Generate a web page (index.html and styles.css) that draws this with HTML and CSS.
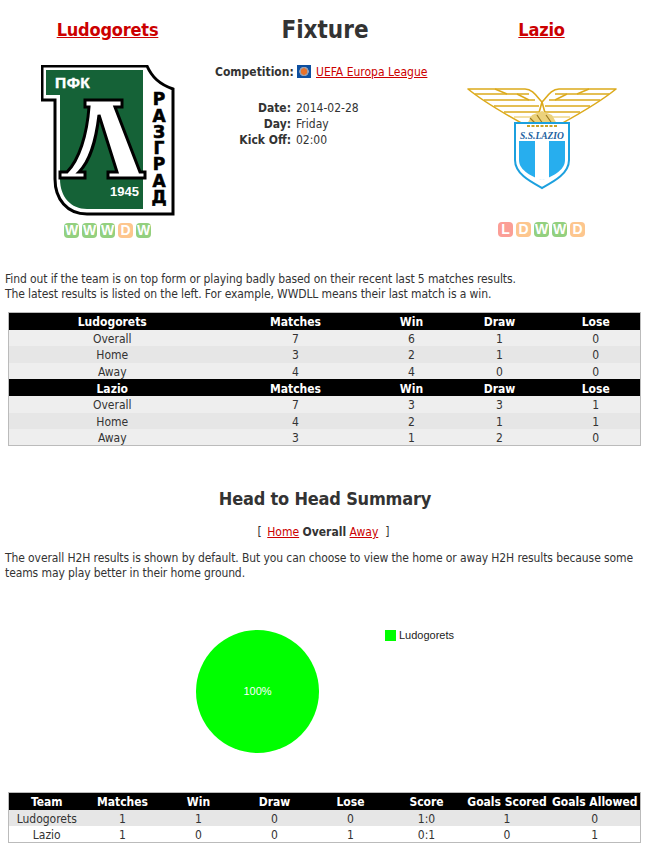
FILE: index.html
```html
<!DOCTYPE html>
<html lang="en">
<head>
<meta charset="utf-8">
<title>Fixture</title>
<link rel="stylesheet" href="styles.css">
</head>
<body>
<header class="fixture">
  <section class="team">
    <h2 class="team-name"><a href="#">Ludogorets</a></h2>
    <svg class="crest-l" width="134" height="151" viewBox="0 0 134 151">
      <path d="M1 1H106C111 12 118 19 132 24V149H46C26 149 14 134 14 114V35H1Z" fill="#fff" stroke="#000" stroke-width="3"/>
      <path d="M5 5H102V144H46C30 144 19 132 19 114V30H5Z" fill="#156237"/>
      <path d="M44 35H81V42H74L99 107H104V113H67V107H76L58 50C55 75 50 95 38 107H44V113H19V107H26C38 95 46 70 48 42H44Z" fill="#fff" stroke="#000" stroke-width="3"/>
      <text class="crest-top" x="14" y="23">ПФК</text>
      <text class="crest-year" x="69" y="131">1945</text>
      <g class="crest-side">
        <text x="118" y="40">Р</text>
        <text x="118" y="57">А</text>
        <text x="118" y="73">З</text>
        <text x="118" y="89">Г</text>
        <text x="118" y="105">Р</text>
        <text x="118" y="122">А</text>
        <text x="118" y="138">Д</text>
      </g>
    </svg>
    <div class="form"><span class="w">W</span><span class="w">W</span><span class="w">W</span><span class="d">D</span><span class="w">W</span></div>
  </section>
  <section class="info">
    <h1>Fixture</h1>
    <div class="meta comp"><b>Competition:</b><span><i class="flag"></i><a href="#">UEFA Europa League</a></span></div>
    <div class="meta"><b>Date:</b><span>2014-02-28</span></div>
    <div class="meta"><b>Day:</b><span>Friday</span></div>
    <div class="meta"><b>Kick Off:</b><span>02:00</span></div>
  </section>
  <section class="team team-right">
    <h2 class="team-name"><a href="#">Lazio</a></h2>
    <svg class="crest-z" width="150" height="104" viewBox="0 0 150 104">
      <g fill="#fff" stroke="#dcaa1c" stroke-width="1.6" stroke-linejoin="round">
        <path d="M1 1H58C66 1 70 9 75 14L70 32L58 37C38 26 18 15 1 1Z"/>
        <path d="M149 1H92C84 1 80 9 75 14L80 32L92 37C112 26 132 15 149 1Z"/>
      </g>
      <g fill="none" stroke="#dcaa1c" stroke-width="1.6">
        <path d="M8 6H62M17 12H68M27 18H72M37 24H72M88 6H142M82 12H133M78 18H123M78 24H113"/>
        <path d="M28 1L40 6M50 6L62 12M122 1L110 6M100 6L88 12"/>
      </g>
      <g stroke="#f0d88c" stroke-width="1.6">
        <path d="M47 29H72M78 29H103"/>
      </g>
      <path d="M60 36L65 27L75 23L85 27L90 36L84 40H66Z" fill="#ecd27c"/>
      <path d="M63 30L70 37M70 27L76 36M79 27L84 34" stroke="#9a7a20" stroke-width="1.2" fill="none"/>
      <path d="M48 35H102V72C102 86 86 94 75 100C64 94 48 86 48 72Z" fill="#fff" stroke="#1ca0de" stroke-width="2"/>
      <path d="M52 53H98V72C98 83 84 89 75 92C66 89 52 83 52 72Z" fill="#27aeee"/>
      <path d="M68 53H82V91L75 92L68 91Z" fill="#fff"/>
      <path d="M60 38H90" stroke="#c9a227" stroke-width="2" stroke-dasharray="3 1.5"/>
      <text class="crest-text" x="75" y="51" text-anchor="middle">S.S.LAZIO</text>
    </svg>
    <div class="form"><span class="l">L</span><span class="d">D</span><span class="w">W</span><span class="w">W</span><span class="d">D</span></div>
  </section>
</header>

<p class="note">Find out if the team is on top form or playing badly based on their recent last 5 matches results.<br>The latest results is listed on the left. For example, WWDLL means their last match is a win.</p>

<table class="stats form-table">
  <tr><th>Ludogorets</th><th>Matches</th><th>Win</th><th>Draw</th><th>Lose</th></tr>
  <tr class="a"><td>Overall</td><td>7</td><td>6</td><td>1</td><td>0</td></tr>
  <tr class="b"><td>Home</td><td>3</td><td>2</td><td>1</td><td>0</td></tr>
  <tr class="a"><td>Away</td><td>4</td><td>4</td><td>0</td><td>0</td></tr>
  <tr><th>Lazio</th><th>Matches</th><th>Win</th><th>Draw</th><th>Lose</th></tr>
  <tr class="a"><td>Overall</td><td>7</td><td>3</td><td>3</td><td>1</td></tr>
  <tr class="b"><td>Home</td><td>4</td><td>2</td><td>1</td><td>1</td></tr>
  <tr class="a"><td>Away</td><td>3</td><td>1</td><td>2</td><td>0</td></tr>
</table>

<h2 class="h2h">Head to Head Summary</h2>
<p class="switch">[ <a class="first" href="#">Home</a> <b>Overall</b> <a href="#">Away</a> &nbsp;]</p>
<p class="note">The overall H2H results is shown by default. But you can choose to view the home or away H2H results because some teams may play better in their home ground.</p>

<div class="chart">
  <div class="pie">100%</div>
  <div class="legend"><i></i>Ludogorets</div>
</div>

<table class="stats h2h-table">
  <tr><th>Team</th><th>Matches</th><th>Win</th><th>Draw</th><th>Lose</th><th>Score</th><th>Goals Scored</th><th>Goals Allowed</th></tr>
  <tr class="b"><td>Ludogorets</td><td>1</td><td>1</td><td>0</td><td>0</td><td>1:0</td><td>1</td><td>0</td></tr>
  <tr class="c"><td>Lazio</td><td>1</td><td>0</td><td>0</td><td>1</td><td>0:1</td><td>0</td><td>1</td></tr>
</table>
</body>
</html>
```
FILE: styles.css
```css
* { box-sizing: border-box; }
html, body { margin: 0; background: #fff; }
body { width: 645px; height: 850px; overflow: hidden; padding: 0 5px; font: 12px/16px Tahoma, "DejaVu Sans Condensed", "Noto Sans", sans-serif; color: #333; }
a { color: #c00; }
.fixture { display: grid; grid-template-columns: 215px 220px 210px; height: 245px; margin: 0 -5px; }
.team { display: flex; flex-direction: column; align-items: center; }
.team-right { padding-left: 3px; }
.team-name { margin: 19px 0 0; font-size: 18px; line-height: 22px; letter-spacing: -0.2px; }
.crest-l { margin-top: 24px; }
.crest-z { margin-top: 47px; }
.crest-top { font: bold 15.5px "Liberation Sans", sans-serif; letter-spacing: 0.5px; fill: #fff; stroke: #fff; stroke-width: 0.4px; }
.crest-year { font: bold 13px "Liberation Sans", sans-serif; fill: #fff; }
.crest-side text { font: bold 17px "DejaVu Sans", sans-serif; fill: #000; stroke: #000; stroke-width: 0.6px; text-anchor: middle; }
.crest-text { font: italic bold 9.5px "Liberation Serif", serif; fill: #1b5fa0; }
.form { display: flex; gap: 3px; margin-top: 7px; }
.team-right .form { margin-top: 30px; }
.form span { width: 15px; height: 15px; border-radius: 4px; color: #fff; font: bold 14px/15px "Liberation Sans", sans-serif; text-align: center; }
.form .w { background: #93d07f; }
.form .d { background: #fdc68e; }
.form .l { background: #fb9e96; }
.info h1 { margin: 14px 0 18px; font-size: 24px; line-height: 32px; text-align: center; color: #333; }
.meta { display: grid; grid-template-columns: 76px 1fr; column-gap: 5px; }
.meta b { text-align: right; }
.comp { margin-bottom: 20px; }
.flag { display: inline-block; width: 14px; height: 13px; margin: 0 5px 0 1px; vertical-align: -2px; background: radial-gradient(circle, #e8722a 0 3px, #9aa0b0 3.5px 4.5px, #0d4fa0 5px); }
.note { margin: 0; line-height: 15px; letter-spacing: -0.1px; }
.fixture + .note { margin-top: 27px; }
.stats { border-collapse: collapse; width: 633px; margin-left: 3px; border: 1px solid #bbb; text-align: center; table-layout: fixed; line-height: 14px; }
.form-table { margin-top: 10px; }
.stats th { background: #000; color: #fff; padding: 2px 0 0; height: 17px; font-weight: bold; white-space: nowrap; }
.stats td { padding: 2px 0 0; height: 16.5px; }
.form-table th:nth-child(1) { width: 207px; }
.form-table th:nth-child(2) { width: 160px; }
.form-table th:nth-child(3) { width: 72px; }
.form-table th:nth-child(4) { width: 104px; }
.h2h-table th { width: 76px; }
.h2h-table th:nth-child(7) { width: 85px; }
.h2h-table th:nth-child(8) { width: auto; }
.a { background: #eee; }
.b { background: #e6e6e6; }
.c { background: #fff; }
.h2h { margin: 41px -5px 0 0; font-size: 18px; line-height: 24px; text-align: center; letter-spacing: -0.2px; }
.switch { margin: 13px 0 11px; padding-left: 2px; text-align: center; }
.first { margin-left: 2px; }
.chart { position: relative; height: 211px; }
.pie { position: absolute; left: 191px; top: 49px; width: 123px; height: 123px; border-radius: 50%; background: #0f0; color: #fff; font: 11px/123px "Liberation Sans", Arial, sans-serif; text-align: center; }
.legend { position: absolute; left: 380px; top: 47px; display: flex; align-items: center; gap: 3px; color: #222; font: 11px/14px "Liberation Sans", Arial, sans-serif; }
.legend i { width: 11px; height: 11px; background: #0f0; }
```
